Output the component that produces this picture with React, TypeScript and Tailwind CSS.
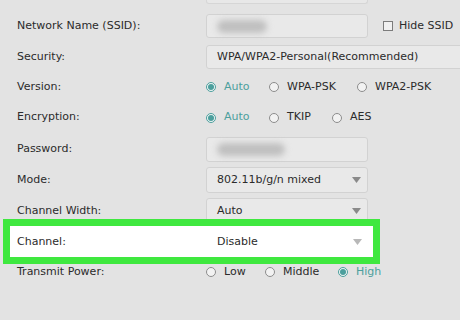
import React from "react";

const font = { fontFamily: '"DejaVu Sans", Verdana, sans-serif' };

function Radio({ checked }: { checked?: boolean }) {
  return checked ? (
    <span className="flex h-[10px] w-[10px] shrink-0 items-center justify-center rounded-full border border-[#4c9f9d] bg-[#eef4f4]">
      <span className="h-[6px] w-[6px] rounded-full bg-[#4c9f9d]" />
    </span>
  ) : (
    <span className="h-[10px] w-[10px] shrink-0 rounded-full border border-[#8c8c8c] bg-[#f2f2f2]" />
  );
}

function Option({ label, checked, w }: { label: string; checked?: boolean; w: string }) {
  return (
    <div className={`flex items-center gap-[8px] ${w}`}>
      <Radio checked={checked} />
      <span className={checked ? "text-[#4c9f9d]" : "text-[#2b2b2b]"}>{label}</span>
    </div>
  );
}

function Arrow({ light }: { light?: boolean }) {
  return (
    <svg width="9" height="6" viewBox="0 0 9 6" className="shrink-0">
      <path d="M0 0 L9 0 L4.5 6 Z" fill={light ? "#b8b8b8" : "#8a8a8a"} />
    </svg>
  );
}

// blurred-out value
function Blur({ w }: { w: string }) {
  return <div className={`h-[13px] rounded-full bg-[#bfbfbf] blur-[3px] ${w}`} />;
}

function Box({ children, className = "" }: { children?: React.ReactNode; className?: string }) {
  return (
    <div className={`flex items-center rounded-[3px] border border-[#d2d2d2] bg-[#e9e9e9] pl-[10px] pr-[5px] ${className}`}>
      {children}
    </div>
  );
}

function Row({ label, h, children }: { label: string; h: string; children?: React.ReactNode }) {
  return (
    <div className={`flex items-center ${h}`}>
      <div className="w-[189px] shrink-0">{label}</div>
      {children}
    </div>
  );
}

export default function App() {
  return (
    <div style={font} className="relative h-[320px] w-[460px] overflow-hidden bg-[#e3e3e3] pl-[17px] text-[11px] text-[#2b2b2b]">
      <div className="ml-[189px] h-[4px] w-[162px] rounded-b-[3px] border border-t-0 border-[#d6d6d6] bg-[#e8e8e8]" />
      <div className="pt-[6px]">
        <Row label="Network Name (SSID):" h="h-[32px]">
          <Box className="h-[24px] w-[162px] pl-[6px]">
            <Blur w="w-[50px]" />
          </Box>
          <div className="ml-[15px] flex items-center gap-[6px]">
            <span className="h-[10px] w-[10px] border border-[#7c7c7c] bg-[#f0f0f0]" />
            <span>Hide SSID</span>
          </div>
        </Row>
        <Row label="Security:" h="h-[30px]">
          <Box className="h-[24px] w-[280px] shrink-0">WPA/WPA2-Personal(Recommended)</Box>
        </Row>
        <Row label="Version:" h="h-[30px]">
          <Option label="Auto" checked w="w-[63px]" />
          <Option label="WPA-PSK" w="w-[88px]" />
          <Option label="WPA2-PSK" w="w-[90px]" />
        </Row>
        <Row label="Encryption:" h="h-[31px]">
          <Option label="Auto" checked w="w-[63px]" />
          <Option label="TKIP" w="w-[63px]" />
          <Option label="AES" w="w-[60px]" />
        </Row>
        <Row label="Password:" h="h-[32px]">
          <Box className="h-[25px] w-[162px] pl-[8px]">
            <Blur w="w-[68px]" />
          </Box>
        </Row>
        <Row label="Mode:" h="h-[30px]">
          <Box className="h-[26px] w-[162px] justify-between pr-[6px]">
            <span>802.11b/g/n mixed</span>
            <Arrow />
          </Box>
        </Row>
        <Row label="Channel Width:" h="h-[32px]">
          <Box className="h-[26px] w-[162px] justify-between pr-[6px]">
            <span>Auto</span>
            <Arrow />
          </Box>
        </Row>
        <div className="relative h-[30px]">
          <div className="absolute left-[-14px] top-[-8px] h-[45px] w-[377px] border-[7px] border-[#3fe83f] bg-white" />
          <div className="relative flex h-full items-center">
            <div className="w-[189px] shrink-0">Channel:</div>
            <div className="flex w-[162px] items-center justify-between pl-[11px] pr-[6px]">
              <span>Disable</span>
              <Arrow light />
            </div>
          </div>
        </div>
        <Row label="Transmit Power:" h="h-[30px]">
          <Option label="Low" w="w-[59px]" />
          <Option label="Middle" w="w-[73px]" />
          <Option label="High" checked w="w-[60px]" />
        </Row>
      </div>
    </div>
  );
}
